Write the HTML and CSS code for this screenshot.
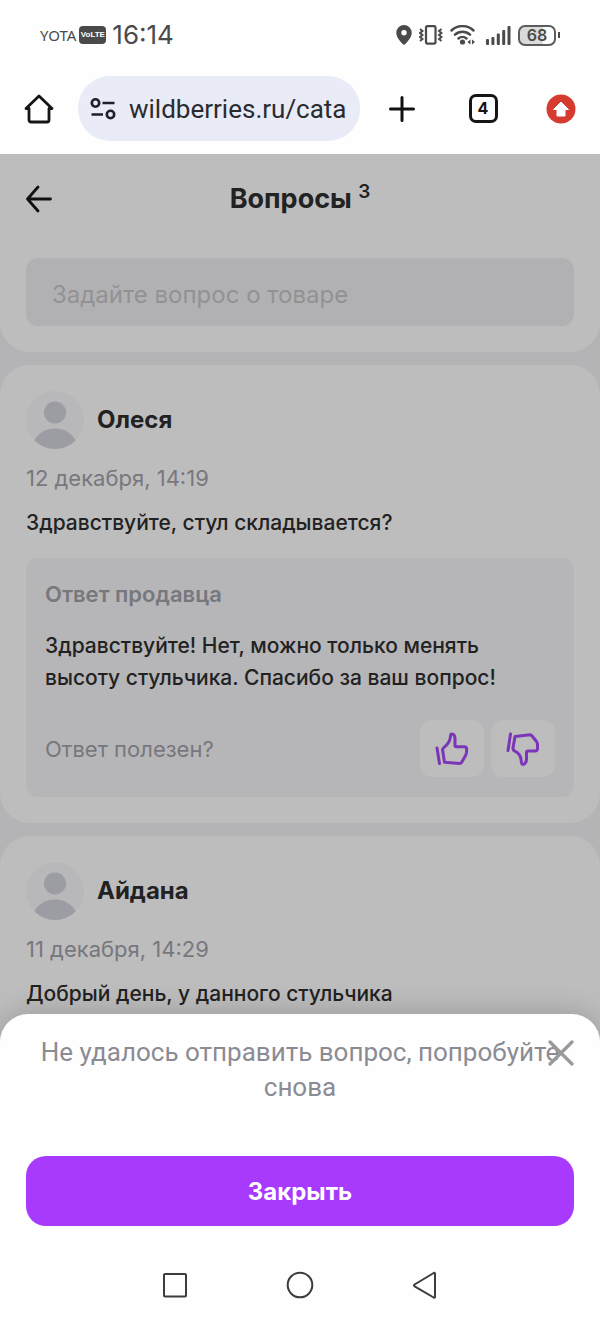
FILE: index.html
```html
<!DOCTYPE html>
<html lang="ru">
<head>
<meta charset="utf-8">
<meta name="viewport" content="width=device-width, initial-scale=1">
<title>Вопросы</title>
<link rel="stylesheet" href="styles.css">
</head>
<body>
<div class="status">
  <div class="status-side">
    <span class="carrier">YOTA</span>
    <span class="volte">VoLTE</span>
    <span class="clock">16:14</span>
  </div>
  <div class="status-side status-icons">
    <svg width="16" height="20" viewBox="0 0 16 20"><path fill="#4a4a4a" fill-rule="evenodd" d="M8 0a7.7 7.7 0 0 1 7.700 7.700C15.700 12 12.500 15.500 9.300 19a1.800 1.800 0 0 1-2.600 0C3.500 15.500.3 12 .3 7.700A7.700 7.700 0 0 1 8 0zm0 5a2.700 2.700 0 1 0 0 5.400A2.700 2.700 0 0 0 8 5z"/></svg>
    <svg class="vibrate" width="24" height="20" viewBox="0 0 24 20" fill="none" stroke="#4a4a4a" stroke-width="2.200"><rect x="7" y="1.100" width="9.500" height="17.500" rx="1.500"/><path stroke-width="1.900" d="M1 4l2.500 2L1 8l2.500 2L1 12l2.500 2L1 16M22.500 4L20 6l2.500 2-2.500 2 2.500 2-2.500 2 2.500 2"/></svg>
    <svg class="wifi" width="26" height="20" viewBox="0 0 26 20" fill="none" stroke="#4a4a4a" stroke-width="2.500" stroke-linecap="round"><path d="M1.500 5.500a16 16 0 0 1 22 0M5 9.700a11 11 0 0 1 15 0M8.500 13.500a6 6 0 0 1 8 0"/><circle cx="12.500" cy="17" r="2.600" fill="#4a4a4a" stroke="none"/><path fill="#4a4a4a" stroke="none" d="M20.500 14.500v5L17.500 17zM22 14.500v5l3-2.500z"/></svg>
    <svg class="signal" width="25" height="20" viewBox="0 0 25 20" fill="#4a4a4a"><rect x="0" y="14" width="3" height="6" rx="1"/><rect x="5.400" y="12" width="3" height="8" rx="1"/><rect x="10.800" y="8.500" width="3" height="11.500" rx="1"/><rect x="16.200" y="5" width="3" height="15" rx="1"/><rect x="21.500" y="1" width="3" height="19" rx="1"/></svg>
    <span class="battery">68</span><span class="battery-tip"></span>
  </div>
</div>
<nav class="browser" aria-label="Браузер">
  <button class="tool home" aria-label="Домой"><svg width="30" height="30" viewBox="0 0 30 30" fill="none" stroke="#151515" stroke-width="2.800" stroke-linejoin="round" stroke-linecap="round"><path d="M2 14.500L15 2l13 12.500h-3V26a2 2 0 0 1-2 2H7a2 2 0 0 1-2-2V14.500z"/></svg></button>
  <label class="address">
    <svg width="26" height="22" viewBox="0 0 26 22" fill="none" stroke="#1e2028" stroke-width="2.600"><circle cx="5.500" cy="5" r="3.700"/><circle cx="20.500" cy="16.500" r="3.700"/><path d="M12.500 5h12M1.500 16.500h11.500"/></svg>
    <input class="address-input" type="text" value="wildberries.ru/cata" aria-label="Адрес">
  </label>
  <button class="tool plus" aria-label="Новая вкладка"><svg width="26" height="26" viewBox="0 0 26 26" stroke="#111" stroke-width="3" stroke-linecap="round"><path d="M13 1.500v23M1.500 13h23"/></svg></button>
  <button class="tool tabs" aria-label="Вкладки"><span class="tab-count">4</span></button>
  <button class="tool update" aria-label="Обновление"><svg width="30" height="30" viewBox="0 0 30 30"><circle cx="15" cy="15" r="14.500" fill="#d53b2e"/><path fill="#fff" stroke="#fff" stroke-linejoin="round" d="M15 8l7.500 7.500H19V22h-8v-6.500H7.500z"/></svg></button>
</nav>
<main class="page">
  <section class="card top">
    <header class="heading">
      <button class="back" aria-label="Назад"><svg width="28" height="28" viewBox="0 0 28 28" fill="none" stroke="#111" stroke-width="2.800" stroke-linecap="round" stroke-linejoin="round"><path d="M24.500 14H1.500M12 2L1.500 14 12 26"/></svg></button>
      <h1 class="title">Вопросы <sup class="count">3</sup></h1>
    </header>
    <input class="ask" type="text" placeholder="Задайте вопрос о товаре" aria-label="Задайте вопрос о товаре">
  </section>
  <article class="card">
    <div class="author">
      <svg class="avatar" width="58" height="58" viewBox="0 0 58 58"><circle cx="29" cy="29" r="29" fill="#b8b8bb"/><circle cx="29" cy="21.500" r="11" fill="#9c9ca3"/><path fill="#9c9ca3" d="M8.500 49.500C12 42 20 37.500 29 37.500s17 4.500 20.500 12A29 29 0 0 1 8.500 49.500z"/></svg>
      <h2 class="name">Олеся</h2>
    </div>
    <time class="date">12 декабря, 14:19</time>
    <p class="question">Здравствуйте, стул складывается?</p>
    <div class="answer">
      <h3 class="answer-title">Ответ продавца</h3>
      <p class="answer-text">Здравствуйте! Нет, можно только менять высоту стульчика. Спасибо за ваш вопрос!</p>
      <div class="helpful">
        <span class="helpful-label">Ответ полезен?</span>
        <button class="vote" aria-label="Полезен"><svg width="34" height="34" viewBox="0 0 34 34" fill="none" stroke="#7b35b8" stroke-width="3" stroke-linecap="round" stroke-linejoin="round"><path d="M2 16l2.500 15.500M7.500 17.500l2 12.700 15 1.200c1 0 1.700-.4 2.200-1.200l4-7c.5-1 .7-2 .8-3l.2-3c0-1.800-.8-2.500-2.500-2.500h-8c-.8 0-1.300-.5-1.200-1.300L20 6C19.800 3 17.800 1.500 15.800 2.300c-.5 4.700-1.300 8.200-4.300 10.700C10.500 14.500 8 15.500 7.500 17.500z"/></svg></button>
        <button class="vote" aria-label="Не полезен"><svg width="34" height="34" viewBox="0 0 34 34" fill="none" stroke="#7b35b8" stroke-width="3" stroke-linecap="round" stroke-linejoin="round"><path d="M4.500 2L2 18.500M9 4.500L7 16c-.2 1.500.5 2.300 1.500 2.800 4.500 2 6.500 5.200 6.800 10.200 0 3.500 1 3.500 3 3 1.500-1 2.200-3 2.200-5v-6.500c0-.8.500-1.500 1.300-1.500h7c1.700 0 2.700-1 2.700-2.500v-4c0-1-.3-2-.8-2.800L26.500 4.500c-.5-1-1.500-1.700-2.500-1.700z"/></svg></button>
      </div>
    </div>
  </article>
  <article class="card last">
    <div class="author">
      <svg class="avatar" width="58" height="58" viewBox="0 0 58 58"><circle cx="29" cy="29" r="29" fill="#b8b8bb"/><circle cx="29" cy="21.500" r="11" fill="#9c9ca3"/><path fill="#9c9ca3" d="M8.500 49.500C12 42 20 37.500 29 37.500s17 4.500 20.500 12A29 29 0 0 1 8.500 49.500z"/></svg>
      <h2 class="name">Айдана</h2>
    </div>
    <time class="date">11 декабря, 14:29</time>
    <p class="question">Добрый день, у данного стульчика</p>
  </article>
  <div class="sheet" role="dialog" aria-label="Ошибка">
    <p class="message">Не удалось отправить вопрос, попробуйте снова</p>
    <button class="dismiss" aria-label="Закрыть окно"><svg width="26" height="26" viewBox="0 0 26 26" stroke="#999" stroke-width="3.200" stroke-linecap="round"><path d="M2 2l22 22M24 2L2 24"/></svg></button>
    <button class="close">Закрыть</button>
  </div>
</main>
<nav class="system" aria-label="Система">
  <button class="key" aria-label="Недавние"><svg width="26" height="28" viewBox="0 0 26 28" fill="none" stroke="#3c3c3c" stroke-width="2"><rect x="2" y="3" width="22" height="22.500" rx="1"/></svg></button>
  <button class="key" aria-label="Главный экран"><svg width="28" height="28" viewBox="0 0 28 28" fill="none" stroke="#3c3c3c" stroke-width="2"><circle cx="14" cy="14" r="12.300"/></svg></button>
  <button class="key" aria-label="Назад"><svg width="26" height="28" viewBox="0 0 26 28" fill="none" stroke="#3c3c3c" stroke-width="2" stroke-linejoin="round"><path d="M23 2.500v23.500a1 1 0 0 1-1.300.5L2.600 15.300a1 1 0 0 1 0-1.800L21.700 2a1 1 0 0 1 1.300.5z"/></svg></button>
</nav>
</body>
</html>
```
FILE: styles.css
```css
* { box-sizing: border-box; }

body {
  margin: 0;
  height: 100vh;
  display: flex;
  flex-direction: column;
  background: #fefefe;
  color: #222;
  font-family: Inter, "Noto Sans", sans-serif;
}

h1, h2, h3, p { margin: 0; }
svg { display: block; flex: none; }

button {
  display: flex;
  align-items: center;
  justify-content: center;
  padding: 0;
  border: 0;
  background: none;
  font-family: inherit;
}

input { border: 0; outline: 0; min-width: 0; font-family: inherit; }

.status {
  height: 70px;
  padding: 0 40px;
  display: flex;
  flex: none;
  align-items: center;
  justify-content: space-between;
  color: #4a4a4a;
}
.status-side { display: flex; align-items: center; }
.carrier { font: 15px/20px "Noto Sans", sans-serif; }
.volte {
  width: 27px;
  margin: 0 6px 0 3px;
  border-radius: 4px;
  background: #4a4a4a;
  color: #fff;
  font: bold 8px/18px "Liberation Sans", sans-serif;
  text-align: center;
}
.clock { font-size: 26px; line-height: 30px; }
.vibrate { margin-left: 7px; }
.wifi { margin-left: 7px; }
.signal { margin-left: 10px; }
.battery {
  width: 38px;
  margin-left: 7px;
  border: 2px solid #5c5c5c;
  border-radius: 7px;
  background: linear-gradient(90deg, #dadada 68%, #fefefe 68%);
  font-size: 16px;
  font-weight: 600;
  line-height: 17px;
  text-align: center;
}
.battery-tip { width: 2px; height: 6px; margin-left: 2px; background: #4a4a4a; }

.browser {
  display: flex;
  flex: none;
  align-items: center;
  padding: 6px 0 13px;
}
.tool { width: 78px; height: 65px; flex: none; }
.plus { width: 84px; }
.address {
  flex: 1;
  min-width: 0;
  height: 65px;
  padding: 0 12px;
  display: flex;
  align-items: center;
  gap: 13px;
  border-radius: 32px;
  background: #e9ebf6;
}
.address-input {
  flex: 1;
  padding: 0;
  background: none;
  color: #2a2b30;
  font-family: Roboto, sans-serif;
  font-size: 26px;
}
.tab-count {
  width: 29px;
  height: 29px;
  border: 3px solid #151515;
  border-radius: 7px;
  color: #151515;
  font-size: 16px;
  font-weight: 700;
  line-height: 23px;
}

.page {
  position: relative;
  flex: 1;
  min-height: 0;
  display: flex;
  flex-direction: column;
  gap: 13px;
  overflow: hidden;
  background: #b4b4b6;
}
.card { flex: none; padding: 26px; border-radius: 30px; background: #bdbdbd; }
.top { padding-top: 14px; border-radius: 0 0 30px 30px; }
.last { flex: 1 0 auto; }

.heading {
  display: grid;
  grid-template-columns: 28px 1fr 28px;
  align-items: center;
  height: 62px;
  margin-bottom: 28px;
}
.title { font-size: 27px; line-height: 32px; font-weight: 700; text-align: center; }
.count { font-size: 19px; line-height: 0; font-weight: 600; }
.ask {
  display: block;
  width: 100%;
  height: 68px;
  padding: 4px 26px 0;
  border-radius: 12px;
  background: #b1b1b3;
  font-size: 24px;
}
.ask::placeholder { color: #929294; opacity: 1; }

.author { display: flex; align-items: center; gap: 13px; }
.name { font-size: 24px; line-height: 32px; font-weight: 700; }
.date { display: block; margin-top: 13px; color: #77777d; font-size: 22px; line-height: 32px; }
.question { margin-top: 13px; font-size: 21px; line-height: 32px; font-weight: 500; }

.answer {
  margin-top: 19px;
  padding: 20px 19px;
  border-radius: 12px;
  background: #b6b6b8;
}
.answer-title { color: #77777d; font-size: 22px; line-height: 32px; font-weight: 600; }
.answer-text { margin-top: 20px; font-size: 21px; line-height: 32px; font-weight: 500; }
.helpful { display: flex; align-items: center; gap: 7px; margin-top: 26px; }
.helpful-label { flex: 1; color: #77777d; font-size: 22px; line-height: 32px; }
.vote { width: 64px; height: 57px; border-radius: 12px; background: #bdbdbd; }

.sheet {
  position: absolute;
  right: 0;
  bottom: 0;
  left: 0;
  padding: 21px 26px 26px;
  border-radius: 28px 28px 0 0;
  background: #fefefe;
  box-shadow: 0 0 30px rgba(0, 0, 0, 0.2);
}
.message {
  color: #8b8b93;
  font-family: Roboto, sans-serif;
  font-size: 26px;
  line-height: 35px;
  text-align: center;
}
.dismiss { position: absolute; top: 26px; right: 26px; }
.close {
  width: 100%;
  height: 70px;
  margin-top: 51px;
  border-radius: 20px;
  background: #a73afd;
  color: #fff;
  font-size: 24px;
  font-weight: 700;
}

.system {
  display: flex;
  flex: none;
  align-items: center;
  justify-content: center;
  gap: 98px;
  height: 66px;
}
```
